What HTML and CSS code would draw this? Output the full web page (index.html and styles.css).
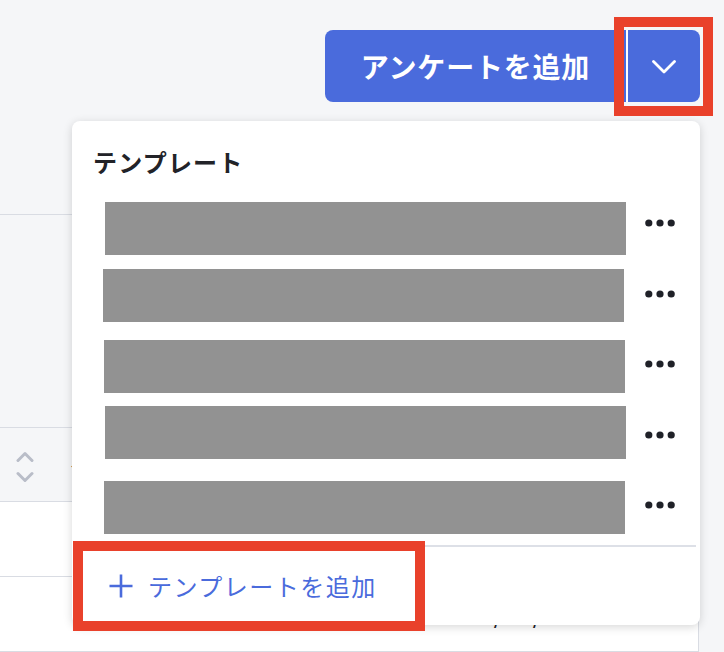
FILE: index.html
```html
<!DOCTYPE html>
<html lang="ja">
<head>
  <meta charset="UTF-8" />
  <meta name="viewport" content="width=device-width, initial-scale=1.0"/>
  <title>アンケート一覧</title>
  <link rel="stylesheet" href="styles.css">
</head>
<body>
  <div class="toolbar">
    <div class="split-btn">
      <button class="btn-main">アンケートを追加</button>
      <button class="btn-toggle">
        <svg width="24" height="14" viewBox="0 0 24 14"><path d="M1.5 1.5l10.5 10.5L22.5 1.5" fill="none" stroke="#fff" stroke-width="2.8" stroke-linecap="round" stroke-linejoin="round"/></svg>
      </button>
    </div>
  </div>

  <div class="list-panel">
    <div class="filters"></div>
    <div class="table">
      <div class="table-head">
        <span class="sort-icon">
          <svg width="18" height="32" viewBox="0 0 18 32"><path d="M2 9.5l7-7 7 7M2 22.5l7 7 7-7" fill="none" stroke="#b9bdc8" stroke-width="3" stroke-linecap="round" stroke-linejoin="round"/></svg>
        </span>
        <span class="col-title">タイトル</span>
        <span class="col-date">作成日</span>
      </div>
      <div class="table-row">
        <span></span>
        <span></span>
        <span class="col-date"></span>
      </div>
      <div class="table-row">
        <span></span>
        <span></span>
        <span class="col-date">2024/05/13</span>
      </div>
    </div>
  </div>

  <!-- template menu, opened from the toggle -->
  <div class="dropdown">
    <div class="dropdown-title">テンプレート</div>
    <ul class="template-list">
      <li class="template-item"><span class="redact"></span><span class="more"><svg width="30" height="8" viewBox="0 0 30 8"><circle cx="3.8" cy="4" r="3.6"/><circle cx="15" cy="4" r="3.6"/><circle cx="26.2" cy="4" r="3.6"/></svg></span></li>
      <li class="template-item"><span class="redact"></span><span class="more"><svg width="30" height="8" viewBox="0 0 30 8"><circle cx="3.8" cy="4" r="3.6"/><circle cx="15" cy="4" r="3.6"/><circle cx="26.2" cy="4" r="3.6"/></svg></span></li>
      <li class="template-item"><span class="redact"></span><span class="more"><svg width="30" height="8" viewBox="0 0 30 8"><circle cx="3.8" cy="4" r="3.6"/><circle cx="15" cy="4" r="3.6"/><circle cx="26.2" cy="4" r="3.6"/></svg></span></li>
      <li class="template-item"><span class="redact"></span><span class="more"><svg width="30" height="8" viewBox="0 0 30 8"><circle cx="3.8" cy="4" r="3.6"/><circle cx="15" cy="4" r="3.6"/><circle cx="26.2" cy="4" r="3.6"/></svg></span></li>
      <li class="template-item"><span class="redact"></span><span class="more"><svg width="30" height="8" viewBox="0 0 30 8"><circle cx="3.8" cy="4" r="3.6"/><circle cx="15" cy="4" r="3.6"/><circle cx="26.2" cy="4" r="3.6"/></svg></span></li>
    </ul>
    <div class="dropdown-footer">
      <svg width="24" height="24" viewBox="0 0 24 24"><path d="M12 0.5v23M0.5 12h23" stroke="currentColor" stroke-width="2.6"/></svg>
      <span>テンプレートを追加</span>
    </div>
  </div>

  <div class="mark mark-toggle"></div>
  <div class="mark mark-add"></div>
</body>
</html>
```

FILE: styles.css
```css
* {
  margin: 0;
  padding: 0;
  box-sizing: border-box;
  font-family: 'Noto Sans CJK JP', 'Noto Sans', sans-serif;
}

body {
  background: #f5f6f8;
  width: 724px;
  height: 652px;
  overflow: hidden;
  position: relative;
  color: #222328;
}

/* top toolbar */
.toolbar {
  display: flex;
  justify-content: flex-end;
  padding: 30px 24px 0 0;
}

.split-btn {
  display: flex;
  height: 72px;
}

.split-btn button {
  border: none;
  background: #4a6bdc;
  color: #fff;
  cursor: pointer;
}

.btn-main {
  width: 301px;
  font-size: 28px;
  font-weight: bold;
  letter-spacing: 0.8px;
  border-radius: 8px 0 0 8px;
}

.btn-toggle {
  width: 74px;
  border-left: 2px solid #fff !important;
  border-radius: 0 8px 8px 0;
  display: flex;
  align-items: center;
  justify-content: center;
  padding-top: 2px;
}

/* survey list */
.list-panel {
  margin-top: 112px;
  width: 699px;
  border-top: 1px solid #d9dce3;
}

.filters {
  height: 212px;
}

.table {
  border-right: 1px solid #d9dce3;
}

.table-head, .table-row {
  display: grid;
  grid-template-columns: 70px 366px 1fr;
  align-items: center;
  height: 75px;
  border-bottom: 1px solid #d9dce3;
  font-size: 22px;
}

.table-head {
  border-top: 1px solid #d9dce3;
  background: #f5f6f8;
  font-weight: bold;
}

.table-row {
  background: #fff;
  font-size: 26px;
}

.sort-icon {
  display: flex;
  padding-left: 16px;
  padding-top: 4px;
}

.table-row .col-date {
  padding-bottom: 5px;
}

/* template dropdown */
.dropdown {
  position: absolute;
  left: 72px;
  top: 121px;
  width: 628px;
  height: 504px;
  background: #fff;
  border-radius: 8px;
  box-shadow: 0 2px 10px rgba(0, 0, 0, 0.16);
  display: flex;
  flex-direction: column;
}

.dropdown-title {
  padding: 23px 21px 0;
  font-size: 24px;
  font-weight: bold;
  line-height: 36px;
  letter-spacing: 1.2px;
}

.template-list {
  list-style: none;
  margin-top: 8px;
}

.template-item {
  height: 70.5px;
  display: flex;
  align-items: center;
  gap: 20px;
  padding: 0 25px 0 32px;
}

.redact {
  flex: 1;
  height: 53px;
  background: #929292;
}

.template-item:nth-child(1) .redact { transform: translate(1px, 5px); }
.template-item:nth-child(2) .redact { transform: translate(-1px, 2px); }
.template-item:nth-child(3) .redact { transform: translateY(2px); }
.template-item:nth-child(4) .redact { transform: translate(1px, -2px); }
.template-item:nth-child(5) .redact { transform: translateY(2px); }

.more {
  display: flex;
  fill: #1f2128;
}

.dropdown-footer {
  flex: 1;
  margin: 4px 4px 0;
  border-top: 2px solid #dde0e7;
  display: flex;
  align-items: center;
  gap: 15px;
  padding-left: 33px;
  color: #4a6bdc;
  font-size: 24px;
  letter-spacing: 1.5px;
}

/* red callout frames */
.mark {
  position: absolute;
  border: 10px solid #e9412b;
}

.mark-toggle {
  left: 614px;
  top: 17px;
  width: 99px;
  height: 99px;
}

.mark-add {
  left: 73px;
  top: 541px;
  width: 352px;
  height: 90px;
}
```
